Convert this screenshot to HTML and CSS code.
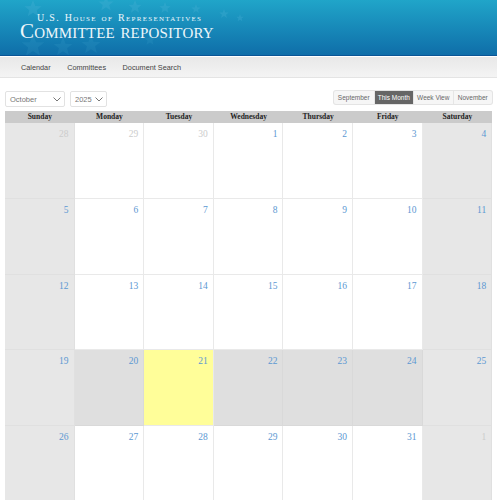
FILE: index.html
```html
<!DOCTYPE html>
<html lang="en">
<head>
<meta charset="UTF-8">
<meta name="viewport" content="width=device-width, initial-scale=1.0">
<title>Committee Repository</title>
<link rel="stylesheet" href="styles.css">
</head>
<body>
<header class="banner">
  <svg class="stars" width="270" height="55" viewBox="0 0 270 55">
    <defs>
      <polygon id="star" points="0,-10 2.6,-3.2 9.5,-3.1 4.1,1.3 5.9,8.1 0,4.2 -5.9,8.1 -4.1,1.3 -9.5,-3.1 -2.6,-3.2"/>
    </defs>
    <g fill="#4fb4d6" fill-opacity="0.28">
      <use href="#star" transform="translate(33 9) scale(.9)"/>
      <use href="#star" transform="translate(106 4) scale(.8)"/>
      <use href="#star" transform="translate(135 7) scale(.7)"/>
      <use href="#star" transform="translate(165 8) scale(.6)"/>
      <use href="#star" transform="translate(196 9) scale(.5)"/>
      <use href="#star" transform="translate(224 14) scale(.5)"/>
      <use href="#star" transform="translate(240 18) scale(.4)"/>
    </g>
    <g fill="#4fb4d6" fill-opacity="0.14">
      <use href="#star" transform="translate(33 46) scale(1.2)"/>
      <use href="#star" transform="translate(63 47) scale(1)"/>
      <use href="#star" transform="translate(91 45) scale(1)"/>
      <use href="#star" transform="translate(150 40) scale(.6)"/>
    </g>
  </svg>
  <div class="brand">
    <div class="brand-top">U.S. House of Representatives</div>
    <div class="brand-main">Committee repository</div>
  </div>
</header>
<nav class="main-nav">
  <a>Calendar</a>
  <a>Committees</a>
  <a>Document Search</a>
</nav>
<div class="toolbar">
  <div class="pickers">
    <div class="picker month-picker">October<svg width="8" height="5" viewBox="0 0 8 5"><path d="M.5.500l3.500 3.500 3.500-3.500" fill="none" stroke="#777" stroke-width="1"/></svg></div>
    <div class="picker year-picker">2025<svg width="8" height="5" viewBox="0 0 8 5"><path d="M.5.500l3.500 3.500 3.500-3.500" fill="none" stroke="#777" stroke-width="1"/></svg></div>
  </div>
  <div class="view-buttons">
    <a>September</a>
    <a class="active">This Month</a>
    <a>Week View</a>
    <a>November</a>
  </div>
</div>
<div class="calendar">
  <div class="dow">Sunday</div><div class="dow">Monday</div><div class="dow">Tuesday</div><div class="dow">Wednesday</div><div class="dow">Thursday</div><div class="dow">Friday</div><div class="dow">Saturday</div>

  <div class="day weekend other">28</div><div class="day other">29</div><div class="day other">30</div><div class="day">1</div><div class="day">2</div><div class="day">3</div><div class="day weekend">4</div>
  <div class="day weekend">5</div><div class="day">6</div><div class="day">7</div><div class="day">8</div><div class="day">9</div><div class="day">10</div><div class="day weekend">11</div>
  <div class="day weekend">12</div><div class="day">13</div><div class="day">14</div><div class="day">15</div><div class="day">16</div><div class="day">17</div><div class="day weekend">18</div>
  <div class="day weekend">19</div><div class="day week">20</div><div class="day today">21</div><div class="day week">22</div><div class="day week">23</div><div class="day week">24</div><div class="day weekend">25</div>
  <div class="day weekend">26</div><div class="day">27</div><div class="day">28</div><div class="day">29</div><div class="day">30</div><div class="day">31</div><div class="day weekend other">1</div>
</div>
</body>
</html>
```

FILE: styles.css
```css
html, body {
  height: 500px;
  overflow: hidden;
}

body {
  margin: 0;
  font-family: "Liberation Sans", Arial, sans-serif;
  background-color: #fff;
}

.banner {
  position: relative;
  height: 41px;
  padding-top: 14px;
  background: linear-gradient(#20a5c9, #0f6ea9);
  border-bottom: 1px solid #0a5596;
  overflow: hidden;
}

.stars {
  position: absolute;
  left: 0;
  top: 0;
}

.brand {
  position: relative;
  margin-left: 20px;
  color: #eef7fb;
  font-family: "Liberation Serif", serif;
  font-variant: small-caps;
  white-space: nowrap;
}

.brand-top {
  margin-left: 17px;
  font-size: 10px;
  line-height: 8px;
  letter-spacing: 1.3px;
  word-spacing: 1px;
}

.brand-main {
  font-size: 21px;
  line-height: 19px;
  letter-spacing: 0.2px;
}

.main-nav {
  display: flex;
  gap: 16.5px;
  height: 20px;
  padding-left: 21px;
  margin-top: 1px;
  align-items: center;
  background: linear-gradient(#e8e8e8, #f4f4f4);
  border-bottom: 1px solid #e4e4e4;
  font-size: 7.3px;
  color: #444;
}

.toolbar {
  display: flex;
  justify-content: space-between;
  align-items: flex-start;
  padding: 13px 5px 0 5px;
  height: 20px;
}

.pickers {
  display: flex;
  gap: 5px;
}

.picker {
  display: flex;
  align-items: center;
  justify-content: space-between;
  box-sizing: border-box;
  height: 16px;
  padding: 0 3px 0 4px;
  background-color: #fff;
  border: 1px solid #e2e2e2;
  border-radius: 2px;
  font-size: 7.5px;
  color: #777;
}

.month-picker {
  width: 60px;
}

.year-picker {
  width: 37px;
}

.view-buttons {
  display: flex;
  height: 13px;
  border-radius: 2px;
  background-color: #f6f6f6;
  box-shadow: 0 0 0 1px #e4e4e4;
}

.view-buttons a {
  width: 39.500px;
  font-size: 6.5px;
  line-height: 13px;
  text-align: center;
  color: #666;
  border-left: 1px solid #e6e6e6;
  box-sizing: border-box;
}

.view-buttons a:first-child {
  border-left: 0;
}

.view-buttons a.active {
  background-color: #666;
  color: #fff;
}

.calendar {
  display: grid;
  grid-template-columns: repeat(7, 69.6px);
  grid-template-rows: 12px repeat(5, 75.8px);
  margin: 0 5px;
  font-family: "Liberation Serif", serif;
}

.dow {
  background-color: #cbcbcb;
  color: #222;
  font-size: 7.5px;
  font-weight: bold;
  line-height: 12px;
  text-align: center;
}

.day {
  box-sizing: border-box;
  padding: 6px 5px 0 0;
  border-right: 1px solid #e9e9e9;
  border-bottom: 1px solid #e9e9e9;
  background-color: #fff;
  color: #5c98d2;
  font-size: 9.5px;
  text-align: right;
}

.weekend {
  background-color: #e7e7e7;
  border-color: #e0e0e0;
}

.week {
  background-color: #dfdfdf;
  border-color: #d9d9d9;
}

.today {
  background-color: #fffe99;
}

.other {
  color: #ccc;
}
```
